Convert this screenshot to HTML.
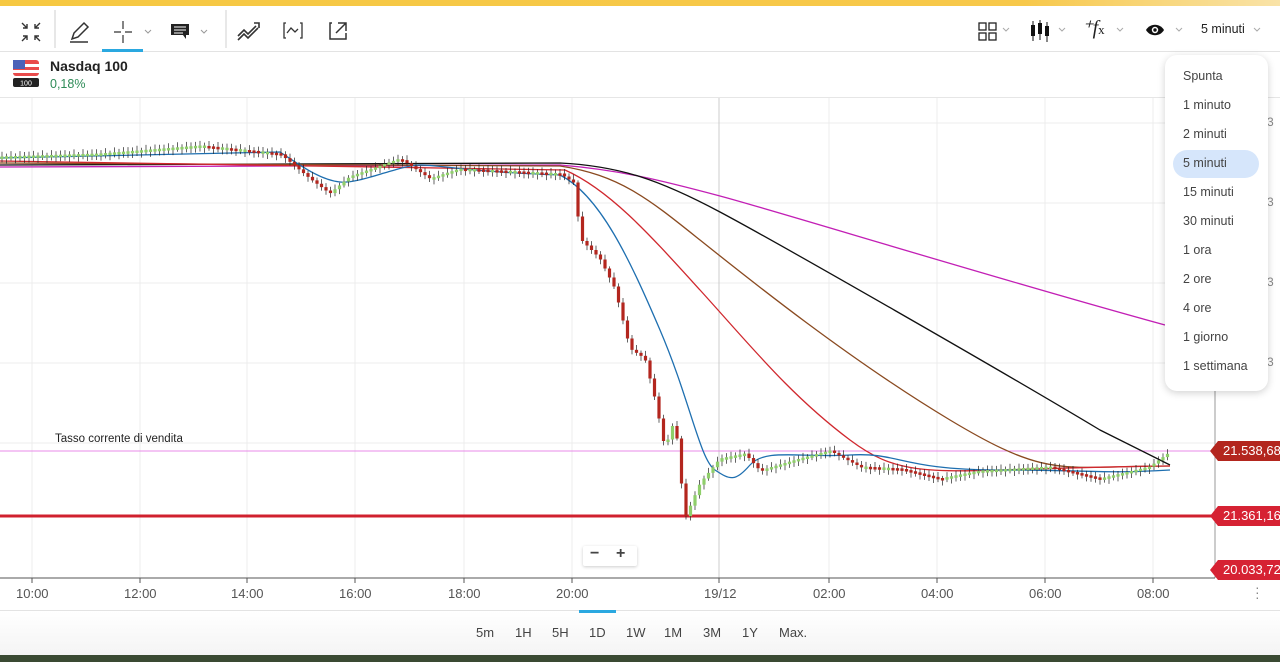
<!DOCTYPE html>
<html><head><meta charset="utf-8"><style>
*{margin:0;padding:0;box-sizing:border-box}
body{width:1280px;height:662px;overflow:hidden;background:#fff;font-family:"Liberation Sans",sans-serif;position:relative;color:#222}
.abs{position:absolute}
.topbar{left:0;top:0;width:1280px;height:6px;background:linear-gradient(90deg,#f6c842,#f7c84a 80%,#f9e3a8)}
.tb{top:6px;left:0;width:1280px;height:46px;border-bottom:1px solid #e3e3e3}
.menu{left:1165px;top:55px;width:103px;height:336px;background:#fff;border-radius:12px;box-shadow:0 2px 8px rgba(0,0,0,.18)}
.menu div{position:absolute;left:18px;font-size:12.5px;color:#444}
.tabs span{position:absolute;top:625px;font-size:13px;color:#444}
.tl{position:absolute;top:586px;font-size:13px;color:#555}
.tag{position:absolute;left:1210px;width:70px;height:20px;color:#fff;font-size:13px;line-height:20px;padding-left:13px;clip-path:polygon(0 50%,8px 0,100% 0,100% 100%,8px 100%)}
</style></head><body>
<div class="abs topbar"></div>
<div class="abs tb">
<svg class="abs" style="left:0;top:0" width="1280" height="46">
<g stroke="#333" stroke-width="1.4" fill="none">
<path d="M22 17l5 5m0-4v4h-4M40 17l-5 5m0-4v4h4M22 35l5-5m0 4v-4h-4M40 35l-5-5m0 4v-4h4"/>
<line x1="55" y1="4" x2="55" y2="42" stroke="#ddd"/>
<path d="M72 33l2-6 10-10 4 4-10 10-6 2zM70 36h18" stroke-width="1.5"/>
<path d="M123 15v8m0 6v8M114 26h7m4 0h7" stroke-width="1.2"/>
<path d="M145 24l3 3 3-3M201 24l3 3 3-3" stroke="#999" stroke-width="1"/>
<line x1="226" y1="4" x2="226" y2="42" stroke="#ddd"/>
<path d="M238 30l6-6 4 4 8-8M238 34l6-6 4 4 10-10M254 17h5v5" stroke-width="1.6"/>
<path d="M286 17h-2v15h2M300 17h2v15h-2M287 27l4-5 4 4 3-3" stroke-width="1.3"/>
<path d="M332 17h-2v16h16v-6M338 17h8v8M346 17l-10 10" stroke-width="1.5"/>
</g>
<path d="M171 18h18v11h-3v4l-3-4h-12z" fill="#222"/>
<path d="M174 21h12M174 24h12M174 27h9" stroke="#fff" stroke-width="1"/>
<rect x="102" y="43" width="41" height="3" fill="#2aa8e0"/>
<g fill="none" stroke="#222" stroke-width="1.3"><rect x="979" y="17" width="7" height="7"/><rect x="989" y="17" width="7" height="7"/><rect x="979" y="27" width="7" height="7"/><rect x="989" y="27" width="7" height="7"/></g>
<g fill="#111"><rect x="1031" y="19" width="4" height="11"/><rect x="1038" y="17" width="4" height="11"/><rect x="1045" y="20" width="4" height="10"/><rect x="1032.5" y="15" width="1" height="20"/><rect x="1039.5" y="14" width="1" height="20"/><rect x="1046.5" y="16" width="1" height="20"/></g>
<path d="M1146 24c4-7 14-7 18 0c-4 7-14 7-18 0z" fill="#111"/><circle cx="1155" cy="24" r="3.2" fill="#fff"/><circle cx="1155" cy="24" r="1.7" fill="#111"/>
<g stroke="#aaa" fill="none"><path d="M1003 22l3 3 3-3M1059 22l3 3 3-3M1117 22l3 3 3-3M1176 22l3 3 3-3M1254 22l3 3 3-3"/></g>
</svg>
<div class="abs" style="left:1082px;top:9px;font-size:20px;font-style:italic;font-family:'Liberation Serif',serif">⁺<span style="font-size:20px">f</span><span style="font-size:13px;font-style:normal">x</span></div>
<div class="abs" style="left:1201px;top:16px;font-size:12.5px;color:#222">5 minuti</div>
</div>
<svg class="abs" style="left:13px;top:60px" width="26" height="28"><rect x="0" y="0" width="26" height="16" rx="3" fill="#e94b4b"/><rect x="0" y="4" width="26" height="3" fill="#fff"/><rect x="0" y="10" width="26" height="3" fill="#fff"/><rect x="0" y="0" width="12" height="9" fill="#4c62b8"/><rect x="0" y="18" width="26" height="9" rx="2" fill="#222"/><text x="13" y="25.5" font-size="7" fill="#fff" text-anchor="middle" font-family="Liberation Sans">100</text></svg>
<div class="abs" style="left:50px;top:58px;font-size:14px;font-weight:bold">Nasdaq 100</div>
<div class="abs" style="left:50px;top:77px;font-size:12.5px;color:#2e8b57">0,18%</div>
<div class="abs" style="left:0;top:97px;width:1280px;height:1px;background:#e6e6e6"></div>
<svg class="abs" style="left:0;top:0" width="1280" height="662" id="ch">
<g stroke="#ececec" stroke-width="1">
<line x1="0" y1="123" x2="1215" y2="123"/><line x1="0" y1="203" x2="1215" y2="203"/><line x1="0" y1="283" x2="1215" y2="283"/><line x1="0" y1="363" x2="1215" y2="363"/><line x1="0" y1="443" x2="1215" y2="443"/>
<line x1="32" y1="98" x2="32" y2="578"/><line x1="140" y1="98" x2="140" y2="578"/><line x1="247" y1="98" x2="247" y2="578"/><line x1="355" y1="98" x2="355" y2="578"/><line x1="464" y1="98" x2="464" y2="578"/><line x1="572" y1="98" x2="572" y2="578"/><line x1="829" y1="98" x2="829" y2="578"/><line x1="937" y1="98" x2="937" y2="578"/><line x1="1045" y1="98" x2="1045" y2="578"/><line x1="1153" y1="98" x2="1153" y2="578"/>
</g>
<line x1="719" y1="98" x2="719" y2="578" stroke="#ccc"/>
<line x1="1215" y1="98" x2="1215" y2="578" stroke="#999"/>
<line x1="0" y1="578" x2="1215" y2="578" stroke="#555"/>
<g stroke="#555"><line x1="32" y1="578" x2="32" y2="583"/><line x1="140" y1="578" x2="140" y2="583"/><line x1="247" y1="578" x2="247" y2="583"/><line x1="355" y1="578" x2="355" y2="583"/><line x1="464" y1="578" x2="464" y2="583"/><line x1="572" y1="578" x2="572" y2="583"/><line x1="719" y1="578" x2="719" y2="583"/><line x1="829" y1="578" x2="829" y2="583"/><line x1="937" y1="578" x2="937" y2="583"/><line x1="1045" y1="578" x2="1045" y2="583"/><line x1="1153" y1="578" x2="1153" y2="583"/></g>
<line x1="0" y1="451" x2="1215" y2="451" stroke="#e88be8"/>
<line x1="0" y1="516" x2="1215" y2="516" stroke="#d0202e" stroke-width="3"/>
<g fill="none" stroke-width="1.3">
<path stroke="#c21fb5" d="M0 167L560 165C620 170 660 180 720 196S1000 280 1165 325"/>
<path stroke="#111" d="M0 165L560 163C620 166 660 180 720 212S1000 370 1100 430L1170 465"/>
<path stroke="#8a4a20" d="M0 163L560 166C620 175 650 200 700 240S850 360 950 420 1060 466 1170 466"/>
<path stroke="#d0282e" d="M0 161L565 170C610 190 650 235 700 290S790 395 850 440 940 468 1170 466"/>
<path stroke="#1e6fb0" d="M0 158L280 152C300 165 320 180 340 182S400 165 420 165 470 172 560 175C600 195 630 260 660 330S700 460 715 470 735 482 750 465 800 458 850 455 900 470 1000 470 1100 474 1170 470"/>
</g>
<g id="cd"></g>
</svg>
<div class="abs" style="left:55px;top:433px;font-size:11.5px;color:#222">Tasso corrente di vendita</div>
<div class="tag" style="top:441px;background:#b3261e">21.538,68</div>
<div class="tag" style="top:506px;background:#d62233">21.361,16</div>
<div class="tag" style="top:560px;background:#d62233">20.033,72</div>
<div class="abs" style="left:1267px;top:115px;font-size:12px;color:#888">3</div>
<div class="abs" style="left:1267px;top:195px;font-size:12px;color:#888">3</div>
<div class="abs" style="left:1267px;top:275px;font-size:12px;color:#888">3</div>
<div class="abs" style="left:1267px;top:355px;font-size:12px;color:#888">3</div>
<div class="abs" style="left:583px;top:546px;width:54px;height:20px;background:#fff;box-shadow:0 1px 3px rgba(0,0,0,.2);border-radius:2px;font-size:16px;font-weight:bold;color:#444"><span style="position:absolute;left:7px;top:-1px">−</span><span style="position:absolute;left:33px;top:-1px">+</span></div>
<div class="tl" style="left:16px">10:00</div><div class="tl" style="left:124px">12:00</div><div class="tl" style="left:231px">14:00</div><div class="tl" style="left:339px">16:00</div><div class="tl" style="left:448px">18:00</div><div class="tl" style="left:556px">20:00</div><div class="tl" style="left:704px">19/12</div><div class="tl" style="left:813px">02:00</div><div class="tl" style="left:921px">04:00</div><div class="tl" style="left:1029px">06:00</div><div class="tl" style="left:1137px">08:00</div>
<div class="abs" style="left:1255px;top:585px;font-size:14px;color:#888;line-height:5px">·<br>·<br>·</div>
<div class="abs" style="left:0;top:610px;width:1280px;height:45px;background:linear-gradient(#fff,#f4f4f4);border-top:1px solid #e3e3e3"></div>
<div class="abs" style="left:579px;top:610px;width:37px;height:3px;background:#2aa8e0"></div>
<div class="tabs"><span style="left:476px">5m</span><span style="left:515px">1H</span><span style="left:552px">5H</span><span style="left:589px">1D</span><span style="left:626px">1W</span><span style="left:664px">1M</span><span style="left:703px">3M</span><span style="left:742px">1Y</span><span style="left:779px">Max.</span></div>
<div class="abs" style="left:0;top:655px;width:1280px;height:7px;background:#3a4a32"></div>
<div class="abs menu">
<div style="top:14px">Spunta</div><div style="top:43px">1 minuto</div><div style="top:72px">2 minuti</div>
<div style="left:8px;top:95px;width:86px;height:28px;background:#d6e6fb;border-radius:14px"></div>
<div style="top:101px">5 minuti</div><div style="top:130px">15 minuti</div><div style="top:159px">30 minuti</div><div style="top:188px">1 ora</div><div style="top:217px">2 ore</div><div style="top:246px">4 ore</div><div style="top:275px">1 giorno</div><div style="top:304px">1 settimana</div>
</div>
<script>
var P=[[0,158],[100,155],[200,147],[280,155],[310,180],[330,195],[350,178],[400,160],[430,180],[460,170],[560,175],[575,185],[580,240],[600,260],[615,290],[630,350],[645,360],[655,400],[665,450],[675,420],[685,520],[700,485],[720,460],[745,455],[760,472],[800,460],[830,452],[860,468],[900,470],[940,480],[980,472],[1050,468],[1100,480],[1150,468],[1168,455]];
function y(x){for(var i=1;i<P.length;i++)if(x<=P[i][0]){var a=P[i-1],b=P[i];return a[1]+(b[1]-a[1])*(x-a[0])/(b[0]-a[0]);}return 455;}
var g=document.getElementById('cd'),s='';
for(var x=2;x<1168;x+=4.5){var y0=y(x-4.5),y1=y(x);var up=y1<y0||(Math.sin(x*1.7)>0.3&&Math.abs(y1-y0)<1);var t=Math.min(y0,y1)-1.5,h=Math.max(Math.abs(y1-y0),2.5);var c=up?'#8fcf6a':'#b3261e';s+='<line x1="'+x+'" y1="'+(t-2-Math.abs(Math.sin(x))*3)+'" x2="'+x+'" y2="'+(t+h+2+Math.abs(Math.cos(x))*3)+'" stroke="#222" stroke-width="0.7"/><rect x="'+(x-1.6)+'" y="'+t+'" width="3.2" height="'+h+'" fill="'+c+'"/>';}
g.innerHTML=s;
</script>
</body></html>
